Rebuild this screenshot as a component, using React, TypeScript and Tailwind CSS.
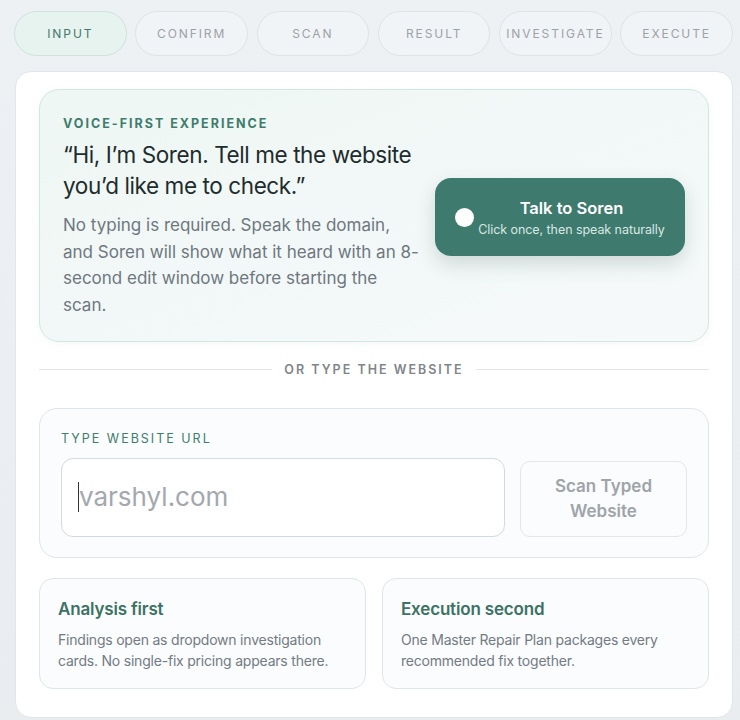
import React from "react";

const steps = ["INPUT", "CONFIRM", "SCAN", "RESULT", "INVESTIGATE", "EXECUTE"];

const notes = [
  {
    title: "Analysis first",
    body: "Findings open as dropdown investigation cards. No single-fix pricing appears there.",
  },
  {
    title: "Execution second",
    body: "One Master Repair Plan packages every recommended fix together.",
  },
];

const App = () => {
  return (
    <div
      className="min-h-[720px] bg-gradient-to-b from-[#eef1f4] to-[#e9edf0] pl-[14px] pr-[7px] pt-[11px]"
      style={{ fontFamily: "Inter, 'Noto Sans', sans-serif" }}
    >
      <div className="grid grid-cols-6 gap-[8.6px]">
        {steps.map((s, i) => (
          <div
            key={s}
            className={`flex h-[45px] items-center justify-center rounded-full border text-[12px] tracking-[0.16em] ${
              i === 0
                ? "border-[#cfe2db] bg-[#e7f3ef] text-[#457869]"
                : "border-[#dde3e6] bg-[#f1f4f6] text-[#9ca2a8]"
            }`}
          >
            {s}
          </div>
        ))}
      </div>

      <div className="mt-[15px] ml-[1px] rounded-[16px] border border-[#e1e6ea] bg-white px-[23px] pt-[17px] pb-[28px]">
        {/* voice card */}
        <div className="flex items-center justify-between rounded-[20px] border border-[#d3e6df] bg-gradient-to-br from-[#eef7f4] to-[#f6f9fa] pt-[26px] pb-[22px] pl-[23px] pr-[23px] shadow-[0_2px_8px_rgba(60,100,90,0.05)]">
          <div className="w-[368px]">
            <div className="text-[12.5px] font-bold leading-[16px] tracking-[0.16em] text-[#3e7c6c]">
              VOICE-FIRST EXPERIENCE
            </div>
            <div className="mt-[7px] text-[22.5px] leading-[31px] tracking-[-0.018em] text-[#1e2c2d]">
              “Hi, I’m Soren. Tell me the website you’d like me to check.”
            </div>
            <p className="mt-[11px] w-[360px] text-[17px] leading-[26.7px] text-[#6e7780]">
              No typing is required. Speak the domain, and Soren will show what it heard with an 8-second edit window before starting the scan.
            </p>
          </div>
          <button className="flex h-[78px] w-[250px] items-center rounded-[16px] bg-[#3e7a6e] pl-[20px] pr-[16px] text-white shadow-[0_8px_20px_rgba(40,80,70,0.18)]">
            <span className="h-[19px] w-[19px] shrink-0 rounded-full bg-white" />
            <span className="flex flex-1 flex-col items-center">
              <span className="text-[16.5px] font-semibold leading-[22px]">Talk to Soren</span>
              <span className="mt-[3px] text-[12.5px] leading-[16px] tracking-[-0.005em] text-[#d9e8e3]">
                Click once, then speak naturally
              </span>
            </span>
          </button>
        </div>

        {/* divider */}
        <div className="mt-[20px] flex items-center gap-[12px]">
          <div className="h-px flex-1 bg-[#e2e6e9]" />
          <div className="text-[12.5px] font-semibold leading-[16px] tracking-[0.16em] text-[#80868c]">
            OR TYPE THE WEBSITE
          </div>
          <div className="h-px flex-1 bg-[#e2e6e9]" />
        </div>

        {/* type card */}
        <div className="mt-[30px] rounded-[18px] border border-[#e0e5e9] bg-[#fafcfd] px-[21px] pt-[22px] pb-[20px]">
          <div className="text-[12.5px] leading-[16px] tracking-[0.16em] text-[#3e7c6c]">
            TYPE WEBSITE URL
          </div>
          <div className="mt-[11px] flex items-end gap-[15px]">
            <div className="flex h-[79px] flex-1 items-center rounded-[12px] border border-[#d3d9de] bg-white pl-[16px]">
              <span className="h-[30px] w-px bg-[#333]" />
              <span className="text-[26px] leading-[30px] text-[#a3a8ae]">varshyl.com</span>
            </div>
            <button className="flex h-[76px] w-[167px] items-center justify-center rounded-[10px] border border-[#e3e7ea] bg-[#fafcfd] px-[16px] text-center text-[17px] font-semibold leading-[25px] text-[#9fa4a9]">
              Scan Typed Website
            </button>
          </div>
        </div>

        {/* notes */}
        <div className="mt-[20px] grid grid-cols-2 gap-[16px]">
          {notes.map((n) => (
            <div
              key={n.title}
              className="h-[111px] rounded-[14px] border border-[#e0e5e9] bg-[#fafcfd] px-[18px] pt-[18px]"
            >
              <div className="text-[17px] font-semibold leading-[24px] tracking-[-0.01em] text-[#3c7264]">{n.title}</div>
              <p className="mt-[8px] text-[14px] leading-[21px] tracking-[-0.015em] text-[#737b84]">{n.body}</p>
            </div>
          ))}
        </div>
      </div>
    </div>
  );
};

export default App;
